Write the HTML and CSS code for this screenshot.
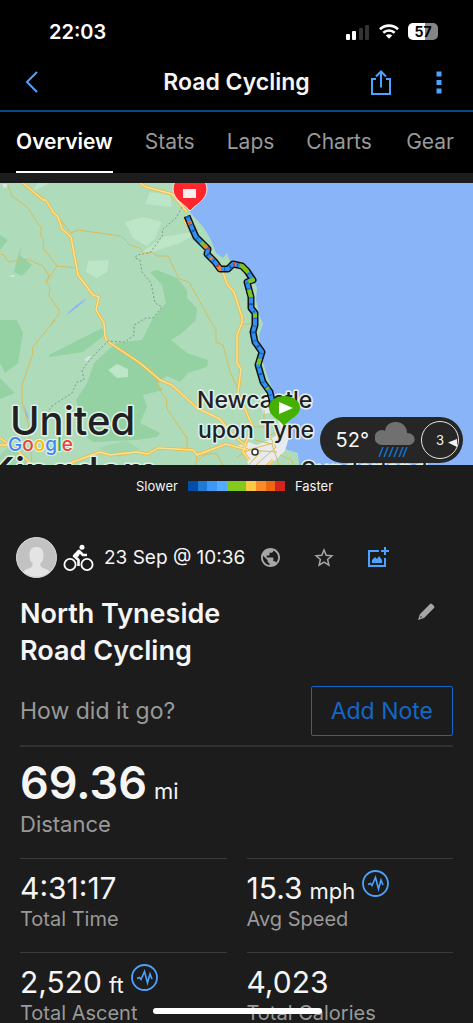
FILE: index.html
```html
<!DOCTYPE html>
<html lang="en">
<head>
    <meta charset="UTF-8">
    <meta name="viewport" content="width=device-width, initial-scale=1.0">
    <title>Road Cycling</title>
    <link rel="stylesheet" href="styles.css">
</head>
<body>
    <div class="status-bar">
        <span class="clock">22:03</span>
        <div class="status-icons">
            <svg width="24" height="16" viewBox="0 0 24 16">
                <rect x="0" y="10" width="4" height="6" rx="1" fill="#fff"/>
                <rect x="6" y="7" width="4" height="9" rx="1" fill="#fff"/>
                <rect x="13" y="4" width="4" height="12" rx="1" fill="#333"/>
                <rect x="19" y="1" width="4" height="15" rx="1" fill="#333"/>
            </svg>
            <svg class="wifi" width="20" height="15" viewBox="0 0 20 15" fill="none" stroke="#fff" stroke-width="2.6">
                <path d="M1 5.2a13 13 0 0 1 18 0"/>
                <path d="M4.3 8.8a8.3 8.3 0 0 1 11.4 0"/>
                <path d="M10 14.8l-3.2-3.3a4.6 4.6 0 0 1 6.4 0z" fill="#fff" stroke="none"/>
            </svg>
            <div class="battery"><span class="battery-level">57</span></div>
        </div>
    </div>

    <header class="header">
        <button class="icon-btn back" aria-label="Back">
            <svg width="14" height="22" viewBox="0 0 14 22" fill="none" stroke="#4ba3ff" stroke-width="2"><path d="M12 1L2 11l10 10"/></svg>
        </button>
        <h1>Road Cycling</h1>
        <div class="header-actions">
            <button class="icon-btn" aria-label="Share">
                <svg width="20" height="25" viewBox="0 0 20 25" fill="none" stroke="#4ba3ff" stroke-width="2"><path d="M5 9H1v15h18V9h-4M10 17.500V2M5 6.500l5-5 5 5"/></svg>
            </button>
            <button class="icon-btn" aria-label="More">
                <svg width="6" height="23" viewBox="0 0 6 23" fill="#4ba3ff"><path d="M.5.500h5v5h-5zM.5 9h5v5h-5zM.5 17.500h5v5h-5z"/></svg>
            </button>
        </div>
    </header>

    <nav class="tabs">
        <a class="tab active" href="#overview">Overview</a>
        <a class="tab" href="#stats">Stats</a>
        <a class="tab" href="#laps">Laps</a>
        <a class="tab" href="#charts">Charts</a>
        <a class="tab" href="#gear">Gear</a>
    </nav>

    <main id="overview">
        <div class="map">
            <svg class="map-canvas" viewBox="0 183 473 282" preserveAspectRatio="xMidYMid slice">
                <rect x="0" y="183" width="473" height="282" fill="#aedcbb"/>

                <!-- woodland and moor -->
                <g fill="#94d2a3">
                    <path d="M150 272l7-2 20 8 10 12v8l10 10-1 12-14 13-11 7 16 13 21 7-1 7-19 6-8 9-13-6-10 7 6 7-20 5 4 12-7 16 20 10-3 4-20 3-44 2-10-8 12-10-14-10-5-14 11-17 7-20 22-20 26-3 10-20 14-17-4-18z"/>
                    <path d="M49 355l53-27 3 7-22 17-33 5zM0 320h17l6 13-5 30-13 10-5-10zM0 378l15 15-15 6zM0 235l8 5-8 10zM22 244l-2 11 12 10-10 11-8-4 4-16z"/>
                    <path d="M0 455l10-9 18 12-2 7H0zM98 448l28-7 14 8-20 8z" opacity=".6"/>
                </g>
                <g fill="#bde5c8">
                    <path d="M125 222l18-5 19 5-7 16-8 8-14-8zM88 261l21-1-2 12-10 6-11-6zM150 192l20 3 2 12-27-3zM142 252l21-15 40-7-23 13-37 12zM30 193l20-10h-12zM108 370l9-6 11 5v8l-11 1z"/>
                </g>
                <path d="M87 361l4-4-2-1-5 4zM2 184h5v3l-3 1zM8 276l7-1-1 2z" fill="#dfe5e4"/>
                <path d="M66 315q9-10 21-17-9 10-21 17zM24 405l6 16-4-6z" fill="#8ab4f8"/>

                <!-- sea -->
                <path fill="#8ab4f8" d="M174 183l16 29 14 16 7 12 5 13 7 5 4-5 3 9 13 4 9 12 5 10-1 12 4 17 3 7-4 11 3 25 6 18 9 24 10 25-6 21 17 5 1 12h174V183z"/>

                <!-- city -->
                <path fill="#e8eaed" d="M237 446l12-4 8 3 12-5 12-8-5-20-13 2-3-15 8-7 10 24 12 18-5 17-15 14h-22l-2-12z"/>

                <g class="road-thin">
                    <path d="M8 185l4 11 15 11 14 21v9l3 2-1 9 14 18 20 2M57 266l-11 16 4 5-1 9 10 14v4l-8 10 4-4-23 28 1 5-11 32v17l7 25 2 26 1 12"/>
                    <path d="M0 254l4 1 4 7 19-3 16 7 6 10-3 6"/>
                    <path d="M58 217l13 16 7-3 43 6 9 9 10 3 3 5 9-1 5 4h11l11 23 10 3 21 38 6 10v12l7 3 7 27 7 15"/>
                    <path d="M155 375l6 17 5 6 1 11 20 29v10M197 455l-1 10M242 324h10M250 427h15l5 8 20-10M237 457l12-7 28 2M264 410v17l12 20-20 18M248 450l32-9M261 451l-12 14M255 440l17 4 7 21"/>
                    <path d="M280 455l12 5 1 5M199 460q5-8 18-6l6 11"/>
                </g>
                <g class="road">
                    <path id="roads" d="M23 183l20 17h3l7 12 5 5 4 12 9 8 7 38 15 20 6 2-3 13 8 13 1 13 2 5 33 22 20 17 12 5 25 23 23 11 13 16 12 10M140 183l6 4 26 7 15 18M186 215l-1 7 3 4M223 272l4 12 7 8 8 25v6l-5 12v28l4 6-3 24 14 32-5 15-4 12 6 8M70 463l30-11 10 3 26-3 12 2 10-6 35 2 4 5 29-11 22 6M0 438l17 12 15 15M0 445h9M273 460l-8 8"/>
                    <use class="road-fill" href="#roads"/>
                </g>
                <path class="border-line" d="M182 207l-6 11-14 12 1 5-13 18-13 2-2 3 5 2 2 12 9 11 4 20 7 4-9 11h-7l-12 7v10l-9 7-17-1-11 11-9 10-6 8 2 10-7 2-5 11-20 13-10 14"/>

                <g class="place">
                    <text class="country" x="10" y="435">United</text>
                    <text class="country" x="-13" y="486">Kingdom</text>
                    <text class="city" x="197" y="408">Newcastle</text>
                    <text class="city" x="198" y="438">upon Tyne</text>
                    <text class="city" x="301" y="478">Sunderland</text>
                </g>
                <circle cx="255" cy="452" r="3" fill="#fff" stroke="#333" stroke-width="1.500"/>

                <text class="google" x="8" y="451"><tspan fill="#4285f4">G</tspan><tspan fill="#ea4335">o</tspan><tspan fill="#fbbc05">o</tspan><tspan fill="#4285f4">g</tspan><tspan fill="#34a853">l</tspan><tspan fill="#ea4335">e</tspan></text>

                <!-- ridden route, coloured by speed -->
                <defs>
                    <path id="route" d="M187 216l5 12 4 9 12 12-1 5 8 8 5 7h8l5-5 9 2 5 5 6 9-6 2 4 15v11l4 5v12l-2 7 2 10 7 10-4 13 5 17 7 10 5 20"/>
                </defs>
                <g fill="none" stroke-linejoin="round">
                    <use href="#route" stroke="#111" stroke-width="7"/>
                    <use href="#route" stroke="#3490f0" stroke-width="4"/>
                    <use href="#route" stroke="#0f5cb8" stroke-width="4" stroke-dasharray="2 7 1 5"/>
                    <use href="#route" stroke="#7dc51e" stroke-width="4" stroke-dasharray="0 30 6 25 2 24 11 7 7 9 8 18 4 14"/>
                    <use href="#route" stroke="#f58220" stroke-width="4" stroke-dasharray="0 6 3 26 3 12 2 10 4 14 3 400"/>
                    <use href="#route" stroke="#e03022" stroke-width="3" stroke-dasharray="0 7 1 31 1 20 2 18 2 400"/>
                </g>

                <path d="M190 211c-4-6-17-11-17-22 0-18 34-18 34 0 0 11-12 16-17 22z" fill="#ff262d" stroke="#f5e6e6"/>
                <rect x="183" y="189" width="13" height="9" fill="#f7eeee"/>
                <path d="M284 426c-5-7-15-10-15-18 0-16 31-16 31 0 0 8-11 11-16 18z" fill="#43b002"/>
                <path d="M279 402v12l14-6z" fill="#fff"/>
            </svg>

            <div class="weather">
                <span class="temp">52°</span>
                <svg width="40" height="38" viewBox="0 0 40 38">
                    <path d="M7 24a7 7 0 0 1 0-15q2 0 3 1C11 3 16 1 21 1c6 0 11 4 11 11 10 0 10 12 1 12z" fill="#707070"/>
                    <path d="M8 26l-4 10M13 26l-4 10M18 26l-4 10M23 26l-4 10M28 26l-4 10M32 26l-4 10" stroke="#1473d2" stroke-width="1.500"/>
                </svg>
                <div class="wind">3
                    <svg class="wind-arrow" width="10" height="8" viewBox="0 0 10 8"><path d="M0 3.500L9 0v8z" fill="#f2f2f2"/></svg>
                </div>
            </div>
        </div>

        <div class="legend">
            <span>Slower</span>
            <div class="scale"></div>
            <span>Faster</span>
        </div>

        <div class="activity">
            <svg class="avatar" width="41" height="41" viewBox="0 0 41 41">
                <circle cx="20.500" cy="20.500" r="20" fill="#c2c2c2" stroke="#ddd"/>
                <path d="M20.500 10c5 0 7 3 7 8 0 4-1 7-3 8v3c2 3 7 2 9 6a20 20 0 0 1-26 0c2-4 7-3 9-6v-3c-2-1-3-4-3-8 0-5 2-8 7-8z" fill="#e4e4e4"/>
            </svg>
            <svg class="bike" width="31" height="28" viewBox="0 0 31 28" fill="none" stroke="#fff" stroke-width="1.800">
                <circle cx="7" cy="20.500" r="5.600"/>
                <circle cx="24" cy="20.500" r="5.600"/>
                <circle cx="19" cy="3.300" r="2.500" fill="#fff" stroke="none"/>
                <path d="M15.500 22v-6L11 12l5-5 4 4h4" stroke-width="2.600" stroke-linejoin="round"/>
                <path d="M10 12l5-6 3 2-3 5z" fill="#fff" stroke="none"/>
            </svg>
            <span class="date">23 Sep @ 10:36</span>
            <svg class="globe" width="19" height="19" viewBox="2 2 20 20" fill="#a6a6a6"><path d="M12 2C6.480 2 2 6.480 2 12s4.480 10 10 10 10-4.480 10-10S17.520 2 12 2zm-1 17.930c-3.950-.49-7-3.850-7-7.930 0-.62.080-1.210.210-1.790L9 15v1c0 1.100.9 2 2 2v1.930zm6.900-2.540c-.26-.81-1-1.390-1.900-1.390h-1v-3c0-.55-.45-1-1-1H8v-2h2c.55 0 1-.45 1-1V7h2c1.100 0 2-.9 2-2v-.41c2.930 1.190 5 4.060 5 7.410 0 2.080-.8 3.970-2.100 5.390z"/></svg>
            <button class="icon-btn action" aria-label="Favourite">
                <svg width="20" height="19" viewBox="0 0 20 19" fill="none" stroke="#a6a6a6" stroke-width="1.500"><path d="M10 2l2.200 5.300 5.700.5-4.300 3.700 1.300 5.600-4.900-3-4.900 3 1.300-5.600L2.100 7.800l5.700-.5z"/></svg>
            </button>
            <button class="icon-btn action" aria-label="Add photo">
                <svg width="21" height="21" viewBox="0 0 21 21" fill="none" stroke="#4ba3ff" stroke-width="2"><path d="M11 4H1v15h16v-8M17 0v8M13 4h8" /><path d="M4 16v-3l3-3 2 2 2-3 3 4v3z" fill="#4ba3ff" stroke="none"/></svg>
            </button>
        </div>

        <section class="details">
            <div class="title-row">
                <h2>North Tyneside Road Cycling</h2>
                <button class="icon-btn" aria-label="Edit title">
                    <svg width="17" height="17" viewBox="0 0 17 17" fill="#a6a6a6"><path d="M0 17l2-6L12 1q1-1 2 0l2 2q1 1 0 2L6 15zm2-2l2-1-1-1z" fill-rule="evenodd"/></svg>
                </button>
            </div>

            <div class="note-row">
                <span>How did it go?</span>
                <button class="note-btn">Add Note</button>
            </div>

            <div class="distance">
                <p class="big-value">69.36 <small>mi</small></p>
                <p class="big-label">Distance</p>
            </div>

            <div class="stats">
                <div class="stat">
                    <p class="value">4:31:17</p>
                    <p class="label">Total Time</p>
                </div>
                <div class="stat">
                    <p class="value">15.3 <small>mph</small>
                        <button class="icon-btn chart-btn" aria-label="Speed chart">
                            <svg width="27" height="27" viewBox="0 0 27 27" fill="none" stroke="#4ba3ff"><circle cx="13.500" cy="13.500" r="12.500" stroke-width="1.800"/><path d="M6 14.500l2.500-1 1.500 2 3.500-8 3 11.500 2.500-9 2 5" stroke-width="1.600"/></svg>
                        </button>
                    </p>
                    <p class="label">Avg Speed</p>
                </div>
                <div class="stat">
                    <p class="value">2,520 <small>ft</small>
                        <button class="icon-btn chart-btn" aria-label="Elevation chart">
                            <svg width="27" height="27" viewBox="0 0 27 27" fill="none" stroke="#4ba3ff"><circle cx="13.500" cy="13.500" r="12.500" stroke-width="1.800"/><path d="M6 14.500l2.500-1 1.500 2 3.500-8 3 11.500 2.500-9 2 5" stroke-width="1.600"/></svg>
                        </button>
                    </p>
                    <p class="label">Total Ascent</p>
                </div>
                <div class="stat">
                    <p class="value">4,023</p>
                    <p class="label">Total Calories</p>
                </div>
            </div>
        </section>
    </main>
    <div class="home-indicator"></div>
</body>
</html>
```
FILE: styles.css
```css
* {
    box-sizing: border-box;
}
body {
    margin: 0;
    font-family: Inter, "Liberation Sans", sans-serif;
    background: #1c1c1c;
    color: #f5f5f5;
}
h1, h2, p {
    margin: 0;
}
button {
    font-family: inherit;
    cursor: pointer;
}
svg {
    display: block;
    flex-shrink: 0;
}
.icon-btn {
    display: flex;
    padding: 0;
    border: none;
    background: none;
}

/* top of the screen */
.status-bar {
    display: flex;
    justify-content: space-between;
    align-items: center;
    height: 56px;
    padding: 7px 32px 0 49px;
    background: #000;
}
.clock {
    font-size: 20px;
    font-weight: 600;
    color: #fff;
}
.status-icons {
    display: flex;
    align-items: center;
    gap: 9px;
}
.battery {
    display: flex;
    align-items: center;
    justify-content: center;
    width: 30px;
    height: 17px;
    margin-right: 3px;
    border-radius: 5px;
    background: linear-gradient(90deg, #fff 57%, #858585 57%);
    color: #000;
    font-size: 14px;
    font-weight: 700;
}
.header {
    display: grid;
    grid-template-columns: 1fr auto 1fr;
    align-items: center;
    height: 56px;
    padding: 0 31px 2px;
    border-bottom: 2px solid #0b4a8a;
    background: #000;
}
.header h1 {
    font-size: 23px;
    font-weight: 600;
}
.back {
    margin-left: -6px;
}
.header-actions {
    display: flex;
    align-items: center;
    justify-content: flex-end;
    gap: 45px;
}
.tabs {
    display: flex;
    gap: 32px;
    height: 61px;
    padding: 0 19px 0 16px;
    background: #000;
}
.tab {
    display: flex;
    align-items: center;
    font-size: 21px;
    color: #999;
    text-decoration: none;
    border-bottom: 2px solid transparent;
}
.tab.active {
    color: #fff;
    font-weight: 600;
    border-color: #fff;
}
.tab:last-child {
    margin-left: auto;
}

/* map */
.map {
    position: relative;
    height: 282px;
    margin-top: 10px;
}
.map-canvas {
    width: 100%;
    height: 100%;
}
.road-thin path {
    fill: none;
    stroke: #d8bc5c;
    stroke-width: 1;
}
.road {
    fill: none;
    stroke: #edb944;
    stroke-width: 3;
    stroke-linejoin: round;
}
.road-fill {
    stroke: #fde293;
    stroke-width: 1.4;
}
.border-line {
    fill: none;
    stroke: #7d9c86;
    stroke-dasharray: 2 2;
}
.place text {
    fill: #202124;
    stroke: #e3f2e8;
    stroke-width: 3px;
    stroke-linejoin: round;
    paint-order: stroke;
    font-weight: 500;
}
.place .country {
    font-size: 40px;
}
.place .city {
    font-size: 23px;
}
.google {
    font-size: 19px;
    font-weight: 500;
    stroke: #e6f3ea;
    stroke-width: 2px;
    paint-order: stroke;
}
.weather {
    position: absolute;
    right: 10px;
    bottom: 2px;
    display: flex;
    align-items: center;
    gap: 6px;
    height: 46px;
    padding: 0 4px 0 16px;
    border-radius: 23px;
    background: #262626;
}
.temp {
    font-size: 20px;
}
.wind {
    position: relative;
    display: flex;
    align-items: center;
    justify-content: center;
    width: 38px;
    height: 38px;
    border: 1px solid #e5e5e5;
    border-radius: 50%;
    font-size: 13px;
}
.wind-arrow {
    position: absolute;
    right: 0;
    top: 17px;
}
.legend {
    display: flex;
    align-items: center;
    justify-content: center;
    gap: 10px;
    height: 42px;
    padding-right: 4px;
    font-size: 13px;
}
.scale {
    width: 97px;
    height: 10px;
    background: linear-gradient(90deg, #004ea8 10%, #1f7ad6 10% 20%, #3d97f5 20% 30%, #55abff 30% 40%, #82cb1c 40% 60%, #fbc944 60% 70%, #fb8a28 70% 80%, #ed670e 80% 90%, #d5221f 90%);
}

/* activity */
.activity {
    display: flex;
    align-items: center;
    height: 41px;
    margin-top: 30px;
    padding: 0 16px;
}
.bike {
    margin: 0 10px 0 6px;
}
.date {
    font-size: 19px;
}
.globe {
    margin-left: 16px;
}
.action {
    margin-left: 34px;
}
.details {
    padding: 0 20px;
}
.title-row {
    display: flex;
    justify-content: space-between;
    align-items: flex-start;
    margin-top: 17px;
}
.title-row .icon-btn {
    margin: 8px 18px 0 0;
}
h2 {
    max-width: 240px;
    font-size: 27px;
    font-weight: 600;
    line-height: 37px;
}
.note-row {
    display: flex;
    justify-content: space-between;
    align-items: center;
    margin-top: 17px;
    padding-bottom: 9px;
    border-bottom: 2px solid #303030;
    color: #999;
    font-size: 23px;
}
.note-btn {
    padding: 0 19px;
    height: 50px;
    border: 1px solid #1268c8;
    border-radius: 2px;
    background: none;
    color: #1268c8;
    font-size: 23px;
}
.distance {
    height: 111px;
    padding-top: 11px;
}
.big-value {
    display: flex;
    align-items: baseline;
    gap: 7px;
    height: 50px;
    font-size: 45px;
    font-weight: 600;
    line-height: 50px;
}
.big-value small {
    font-size: 22px;
    font-weight: 400;
}
.big-label {
    font-size: 22px;
    line-height: 32px;
    color: #999;
}
.stats {
    display: grid;
    grid-template-columns: 1fr 1fr;
    column-gap: 20px;
}
.stat {
    padding-top: 11px;
    height: 94px;
    border-top: 1px solid #3a3a3a;
}
.stat:nth-last-child(-n+2) {
    height: auto;
}
.value {
    display: flex;
    align-items: baseline;
    gap: 7px;
    height: 36px;
    font-size: 30px;
    line-height: 36px;
}
.value small {
    font-size: 22px;
}
.chart-btn {
    align-self: flex-start;
}
.label {
    font-size: 20px;
    line-height: 26px;
    color: #999;
}
.home-indicator {
    position: fixed;
    bottom: 9px;
    left: 50%;
    width: 169px;
    height: 6px;
    margin-left: -84px;
    border-radius: 3px;
    background: #fff;
}
```
